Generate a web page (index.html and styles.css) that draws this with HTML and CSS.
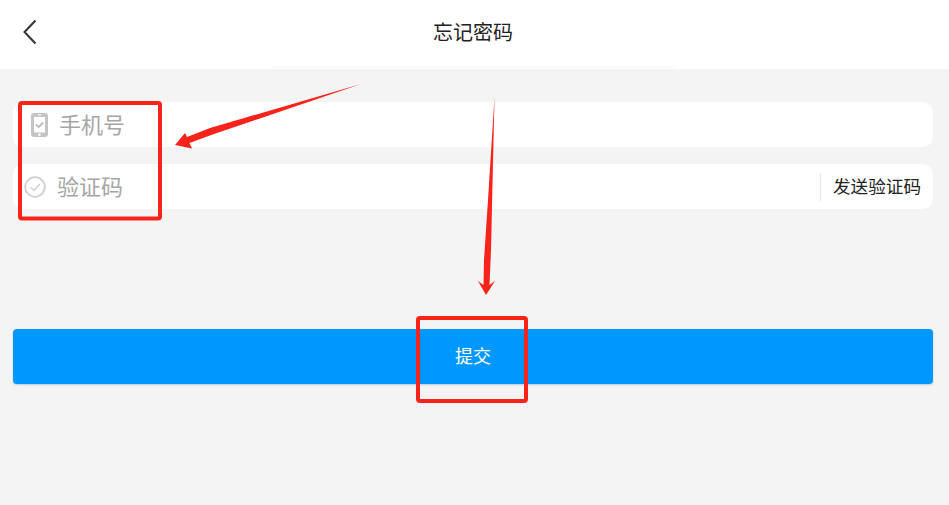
FILE: index.html
```html
<!DOCTYPE html>
<html lang="zh-CN">
<head>
    <meta charset="UTF-8">
    <meta name="viewport" content="width=device-width, initial-scale=1.0">
    <title>忘记密码</title>
    <link rel="stylesheet" href="styles.css">
</head>
<body>
    <header class="top-bar">
        <svg class="back-icon" width="16" height="26" viewBox="0 0 16 26">
            <path d="M13.5 1.5 L2.500 13 L13.5 24.5" fill="none" stroke="#333" stroke-width="2"/>
        </svg>
        <h1 class="title">忘记密码</h1>
        <div class="top-seam"></div>
    </header>

    <main class="form">
        <div class="field field-phone">
            <svg class="icon-phone" width="17" height="24" viewBox="0 0 17 24">
                <path fill-rule="evenodd" fill="#c4c4c4" d="M3 0 H14 A3 3 0 0 1 17 3 V21 A3 3 0 0 1 14 24 H3 A3 3 0 0 1 0 21 V3 A3 3 0 0 1 3 0 Z M3 4 V19.500 H14 V4 Z"/>
                <circle cx="8.500" cy="21.700" r="1.200" fill="#fff"/>
                <rect x="7" y="1.500" width="3" height="1" fill="#fff"/>
                <path d="M4.800 11.300 L7.800 14 L12.200 9.500" fill="none" stroke="#bbb" stroke-width="1.800"/>
            </svg>
            <span class="placeholder">手机号</span>
        </div>
        <div class="field field-code">
            <svg class="icon-check" width="22" height="22" viewBox="0 0 22 22">
                <circle cx="11" cy="11" r="9.800" fill="none" stroke="#d0d0d0" stroke-width="1.800"/>
                <path d="M6.500 11.200 L10 14.300 L15.800 8.300" fill="none" stroke="#d0d0d0" stroke-width="1.500"/>
            </svg>
            <span class="placeholder">验证码</span>
            <span class="send-code">发送验证码</span>
        </div>
        <button class="submit-btn">提交</button>
    </main>

    <!-- annotations drawn over the screenshot -->
    <svg class="marks" width="949" height="505" viewBox="0 0 949 505">
        <rect x="20" y="103" width="140" height="115.500" rx="2" fill="none" stroke="#f8231a" stroke-width="4"/>
        <rect x="418" y="318" width="108" height="83" rx="2" fill="none" stroke="#f8231a" stroke-width="4"/>
        <polygon points="361,84 210,128 187,137 185,133 175,145 192,148.500 189.500,143 214,134" fill="#f8231a"/>
        <polygon points="494.500,97 488,200 484,260 483.500,285 478,281 486,295 495,281 489.500,285 491,250" fill="#f8231a"/>
    </svg>
</body>
</html>
```

FILE: styles.css
```css
* {
    box-sizing: border-box;
}

body {
    margin: 0;
    height: 505px;
    overflow: hidden;
    background: #f4f4f4;
    font-family: "Noto Sans CJK SC", "Noto Sans", sans-serif;
    position: relative;
}

.top-bar {
    height: 69px;
    background: #fff;
    display: flex;
    align-items: center;
    justify-content: center;
    position: relative;
}

.back-icon {
    position: absolute;
    left: 22px;
    top: 19px;
}

.title {
    margin: 0 3px 7px 0;
    font-size: 20px;
    font-weight: 400;
    color: #222;
}

.top-seam {
    position: absolute;
    left: 272px;
    top: 66px;
    width: 403px;
    height: 2px;
    background: #fafafa;
}

.form {
    padding: 33px 16px 0 13px;
}

.field {
    height: 45px;
    background: #fff;
    border-radius: 10px;
    display: flex;
    align-items: center;
    margin-bottom: 17px;
}

.icon-phone {
    margin-left: 18px;
    margin-right: 11px;
}

.icon-check {
    margin-left: 11px;
    margin-right: 11px;
}

.placeholder {
    margin-bottom: 3px;
    font-size: 22px;
    color: #a6a6a6;
}

.send-code {
    margin-left: auto;
    height: 28px;
    line-height: 26px;
    border-left: 1px solid #e6e6e6;
    padding-left: 12px;
    width: 113px;
    white-space: nowrap;
    font-size: 17.600px;
    color: #222;
}

.submit-btn {
    display: block;
    width: 100%;
    height: 55px;
    margin-top: 120px;
    padding-bottom: 4px;
    border: none;
    border-radius: 4px;
    background: #0098ff;
    box-shadow: 0 1px 2px rgba(0, 90, 160, 0.25);
    color: #fff;
    font-family: inherit;
    font-size: 18px;
}

.marks {
    position: absolute;
    left: 0;
    top: 0;
}
```
